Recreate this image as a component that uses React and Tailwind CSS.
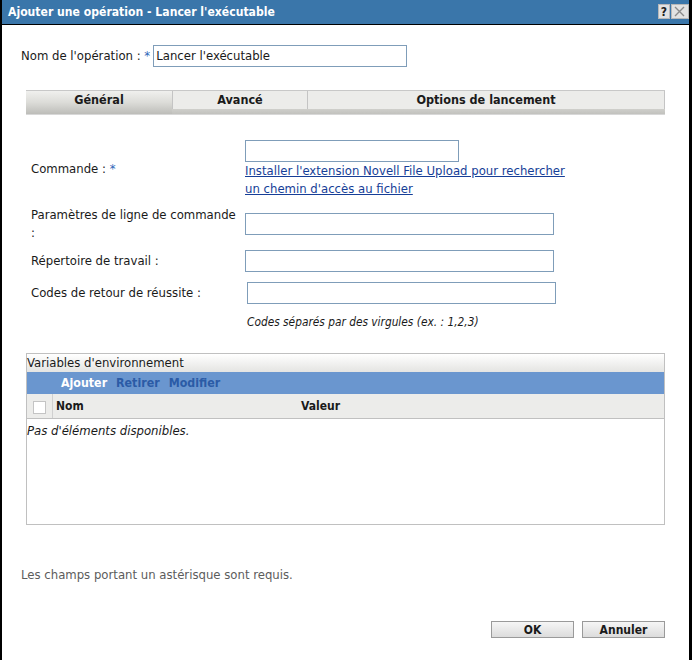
export default function App() {
  const inputCls = "h-[22px] border border-[#7f9db9] bg-white";
  return (
    <div className="w-[692px] h-[660px] bg-white flex flex-col border-l-2 border-r-[3px] border-black font-['DejaVu_Sans_Condensed','DejaVu_Sans',sans-serif] font-stretch-condensed text-[13px] text-[#1a1a1a] overflow-hidden">
      {/* Title bar */}
      <div className="h-[25px] shrink-0 bg-[#3a76aa] border-b border-black flex items-start justify-between">
        <div className="pl-[6px] pt-[4px] text-white font-bold text-[12.1px] leading-[16px] whitespace-nowrap">
          Ajouter une opération - Lancer l'exécutable
        </div>
        <div className="flex gap-px pt-[4px]">
          <div className="w-[12px] h-[15px] bg-[#e2e2e2] border border-[#b8b8b8] flex items-center justify-center text-[12px] font-bold leading-none text-[#202020]">
            ?
          </div>
          <div className="w-[18px] h-[15px] bg-[#e2e2e2] border border-[#b8b8b8] flex items-center justify-start pl-[2px]">
            <svg width="11" height="11" viewBox="0 0 11 11">
              <path d="M1 1 L10 10 M10 1 L1 10" stroke="#8a8a8a" strokeWidth="1.4" fill="none" />
            </svg>
          </div>
        </div>
      </div>

      {/* Content */}
      <div className="flex flex-col pl-[19px] pr-[24px]">
        {/* Name row */}
        <div className="mt-[20px] flex items-center">
          <span className="whitespace-nowrap">
            Nom de l'opération : <span className="text-[#2f66b8]">*</span>
          </span>
          <div className={`${inputCls} ml-[3px] w-[254px] flex items-center pl-[2px] text-[13px]`}>
            Lancer l'exécutable
          </div>
        </div>

        {/* Tabs */}
        <div className="mt-[23px] ml-[5px] w-[639px] h-[25px] flex border-t border-[#c8c8c8]">
          <div className="w-[146px] h-full bg-gradient-to-b from-[#f0f0ee] via-[#dcdcd8] to-[#bdbdb9] flex justify-center pt-[1px] font-bold text-[12.5px] leading-[16px] border-b border-[#d8d8d8]">
            Général
          </div>
          <div className="w-[135px] h-full flex flex-col">
            <div className="h-[18px] bg-[#ececea] border-l border-[#c4c4c4] flex justify-center pt-[1px] font-bold text-[12.5px] leading-[16px]">
              Avancé
            </div>
            <div className="flex-1 bg-gradient-to-b from-[#cfcfcb] to-[#c2c2be] border-b border-[#d8d8d8]" />
          </div>
          <div className="flex-1 h-full flex flex-col">
            <div className="h-[18px] bg-[#ececea] border-l border-r border-[#c4c4c4] flex justify-center pt-[1px] font-bold text-[12.5px] leading-[16px]">
              Options de lancement
            </div>
            <div className="flex-1 bg-gradient-to-b from-[#cfcfcb] to-[#c2c2be] border-b border-[#d8d8d8]" />
          </div>
        </div>

        {/* Form */}
        <div className="mt-[25px] ml-[10px] flex flex-col">
          <div className="flex items-center">
            <div className="w-[214px] shrink-0 leading-[18px]">
              Commande : <span className="text-[#2f66b8]">*</span>
            </div>
            <div className="flex flex-col">
              <div className={`${inputCls} w-[214px]`} />
              <a href="#" className="text-[#163e97] underline leading-[18px] whitespace-nowrap">
                Installer l'extension Novell File Upload pour rechercher
              </a>
              <a href="#" className="text-[#163e97] underline leading-[18px] self-start">
                un chemin d'accès au fichier
              </a>
            </div>
          </div>

          <div className="mt-[8px] flex items-center">
            <div className="w-[214px] shrink-0 leading-[18px]">
              Paramètres de ligne de commande
              <br />:
            </div>
            <div className={`${inputCls} w-[309px]`} />
          </div>

          <div className="mt-[8px] flex items-center">
            <div className="w-[214px] shrink-0 leading-[18px]">Répertoire de travail :</div>
            <div className={`${inputCls} w-[309px]`} />
          </div>

          <div className="mt-[10px] flex items-center">
            <div className="w-[216px] shrink-0 leading-[18px]">Codes de retour de réussite :</div>
            <div className={`${inputCls} w-[309px]`} />
          </div>

          <div className="mt-[9px] pl-[216px] italic text-[11.8px] leading-[18px]">
            Codes séparés par des virgules (ex. : 1,2,3)
          </div>
        </div>

        {/* Environment variables panel */}
        <div className="mt-[22px] ml-[5px] w-[639px] h-[172px] border border-[#c0c0c0] flex flex-col">
          <div className="h-[18px] bg-gradient-to-b from-white to-[#e4e4e2] leading-[18px]">
            Variables d'environnement
          </div>
          <div className="h-[22px] bg-[#6a96cf] flex items-center pl-[34px] gap-[9px] font-bold text-[12.3px]">
            <span className="text-white">Ajouter</span>
            <span className="text-[#2b5ba6]">Retirer</span>
            <span className="text-[#2b5ba6]">Modifier</span>
          </div>
          <div className="h-[25px] bg-[#ececea] border-b border-[#c0c0c0] flex items-stretch font-bold text-[12px]">
            <div className="w-[26px] border-r border-[#d0d0d0] flex items-center justify-center pt-[3px]">
              <div className="w-[13px] h-[13px] bg-white border border-[#c4c4c4]" />
            </div>
            <div className="w-[248px] pl-[3px] flex items-center">Nom</div>
            <div className="flex items-center">Valeur</div>
          </div>
          <div className="italic pt-[3px] leading-[18px]">Pas d'éléments disponibles.</div>
        </div>

        {/* Footer */}
        <div className="mt-[41px] leading-[18px] text-[#5c5c5c]">
          Les champs portant un astérisque sont requis.
        </div>

        <div className="mt-[37px] flex justify-end gap-[8px]">
          <button className="w-[83px] h-[17px] border border-[#9a9a9a] bg-gradient-to-b from-[#f6f6f6] to-[#dcdcdc] font-bold text-[12px] leading-none text-[#1a1a1a]">
            OK
          </button>
          <button className="w-[83px] h-[17px] border border-[#9a9a9a] bg-gradient-to-b from-[#f6f6f6] to-[#dcdcdc] font-bold text-[12px] leading-none text-[#1a1a1a]">
            Annuler
          </button>
        </div>
      </div>
    </div>
  );
}
